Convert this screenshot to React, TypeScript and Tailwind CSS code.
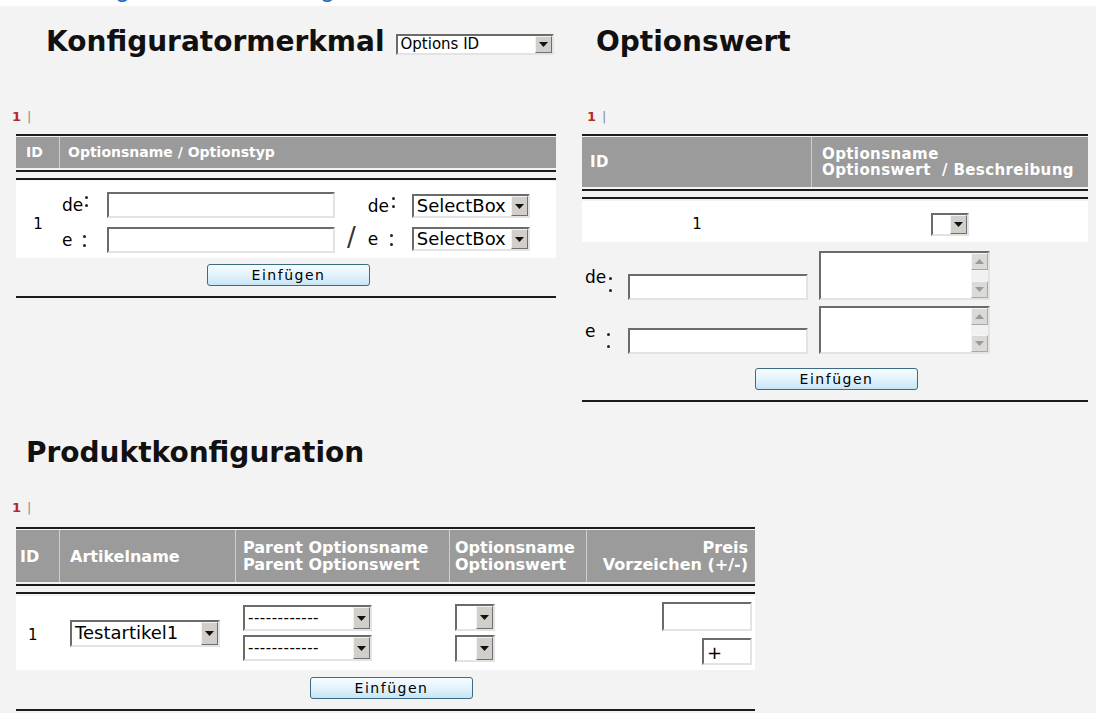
import React from 'react';

const sunken = 'border-2 border-t-[#6b6b6b] border-l-[#6b6b6b] border-b-[#e3e3e3] border-r-[#e3e3e3]';

function DownArrow({ color = '#111' }: { color?: string }) {
  return (
    <svg width="9" height="5" viewBox="0 0 9 5">
      <path d="M0 0h9L4.5 5z" fill={color} />
    </svg>
  );
}

function UpArrow({ color = '#111' }: { color?: string }) {
  return (
    <svg width="9" height="5" viewBox="0 0 9 5">
      <path d="M0 5h9L4.5 0z" fill={color} />
    </svg>
  );
}

function DropBtn() {
  return (
    <div className="w-[17px] shrink-0 flex items-center justify-center bg-[#d2cfca] border border-t-[#f2f2f2] border-l-[#f2f2f2] border-b-[#6f6f6f] border-r-[#6f6f6f]">
      <DownArrow />
    </div>
  );
}

function Select({ cls, text = '', textCls = 'text-[18px]' }: { cls: string; text?: string; textCls?: string }) {
  return (
    <div className={`flex bg-white ${sunken} ${cls}`}>
      <div className={`flex-1 flex items-center pl-[3px] overflow-hidden whitespace-nowrap leading-none ${textCls}`}>{text}</div>
      <DropBtn />
    </div>
  );
}

function Input({ cls, text = '' }: { cls: string; text?: string }) {
  return (
    <div className={`bg-white flex items-end pl-[3px] pb-[1px] text-[18px] leading-none ${sunken} ${cls}`}>{text}</div>
  );
}

function TextArea({ cls }: { cls: string }) {
  return (
    <div className={`flex bg-white ${sunken} ${cls}`}>
      <div className="flex-1" />
      <div className="w-[17px] flex flex-col justify-between bg-[#f1f1f1]">
        <div className="h-[17px] flex items-center justify-center bg-[#dcdad6] border border-t-[#f5f5f5] border-l-[#f5f5f5] border-b-[#a8a8a8] border-r-[#a8a8a8]">
          <UpArrow color="#9a9a9a" />
        </div>
        <div className="h-[17px] flex items-center justify-center bg-[#dcdad6] border border-t-[#f5f5f5] border-l-[#f5f5f5] border-b-[#a8a8a8] border-r-[#a8a8a8]">
          <DownArrow color="#9a9a9a" />
        </div>
      </div>
    </div>
  );
}

function Btn({ cls = '' }: { cls?: string }) {
  return (
    <div className={`w-[163px] h-[22px] rounded-[3px] border border-[#3d6a84] bg-linear-to-b from-[#f6fcff] via-[#e3f3fc] to-[#c6e5f5] flex items-center justify-center text-[14px] tracking-[1.5px] text-black ${cls}`}>
      Einfügen
    </div>
  );
}

function Pager({ cls = '' }: { cls?: string }) {
  return (
    <div className={`text-[13px] leading-[14px] ${cls}`}>
      <span className="font-bold text-[#b02a2f]">1</span>
      <span className="text-[#8a8a8a] ml-[6px]">|</span>
    </div>
  );
}

function Line({ cls = '' }: { cls?: string }) {
  return <div className={`h-[2px] bg-[#1c1c1c] ${cls}`} />;
}

function Heading({ children }: { children: React.ReactNode }) {
  return <h1 className="text-[28px] font-bold leading-[34px] text-[#111]">{children}</h1>;
}

// small colon made of two dots, used by the stacked labels
function Dots({ cls = '' }: { cls?: string }) {
  return (
    <span className={`flex flex-col ${cls}`}>
      <span className="w-[3px] h-[3px] rounded-full bg-[#222]" />
      <span className="w-[3px] h-[3px] rounded-full bg-[#222]" />
    </span>
  );
}

export default function App() {
  return (
    <div className="w-[1096px] h-[713px] overflow-hidden bg-[#f3f3f3] font-['DejaVu_Sans',sans-serif] text-black">
      {/* cut-off page title */}
      <div className="h-[6px] overflow-hidden bg-white">
        <div className="-mt-[19px] flex text-[18px] font-bold leading-[20px] text-[#2e6fc0] font-['Open_Sans',sans-serif] whitespace-nowrap">
          <span className="ml-[70px]">Konfiguration</span>
          <span className="ml-[34px]">Verwaltung</span>
        </div>
      </div>

      <div className="flex pl-[16px]">
        {/* Konfiguratormerkmal */}
        <div className="w-[540px]">
          <div className="flex items-center pt-[19px] pl-[30px]">
            <Heading>Konfiguratormerkmal</Heading>
            <Select cls="w-[158px] h-[21px] ml-[11px] mt-[5px]" text="Options ID" textCls="text-[15px]" />
          </div>
          <Pager cls="mt-[51px] -ml-[4px]" />
          <Line cls="mt-[10px]" />
          <div className="mt-[1px] h-[31px] bg-[#9b9b9b] flex text-white font-bold text-[14px]">
            <div className="w-[44px] border-r border-[#cfcfcf] flex items-center pl-[10px]">ID</div>
            <div className="flex items-center pl-[8px]">Optionsname / Optionstyp</div>
          </div>
          <Line cls="mt-[2px]" />
          <Line cls="mt-[6px]" />
          <div className="mt-[1px] h-[77px] bg-white flex">
            <div className="w-[44px] flex items-center justify-center pt-[10px] text-[15px]">1</div>
            <div className="flex flex-col pt-[11px] gap-[9px]">
              <div className="flex items-center h-[26px]">
                <div className="w-[47px] pl-[2px] text-[17px] leading-[20px] flex">
                  <span>de</span>
                  <Dots cls="gap-[5px] ml-[2px] mt-[1px]" />
                </div>
                <Input cls="w-[228px] h-[26px]" />
              </div>
              <div className="flex items-center h-[26px]">
                <div className="w-[47px] pl-[2px] text-[17px] leading-[20px] flex">
                  <span>e</span>
                  <Dots cls="gap-[6px] ml-[11px] mt-[5px]" />
                </div>
                <Input cls="w-[228px] h-[26px]" />
              </div>
            </div>
            <div className="ml-[12px] mt-[43px] text-[26px] leading-[26px] text-[#333]">/</div>
            <div className="flex flex-col pt-[13px] gap-[9px] ml-[12px]">
              <div className="flex items-center h-[24px]">
                <div className="w-[44px] text-[17px] leading-[20px] flex">
                  <span>de</span>
                  <Dots cls="gap-[5px] ml-[3px] mt-[1px]" />
                </div>
                <Select cls="w-[118px] h-[24px]" text="SelectBox" />
              </div>
              <div className="flex items-center h-[24px]">
                <div className="w-[44px] text-[17px] leading-[20px] flex">
                  <span>e</span>
                  <Dots cls="gap-[6px] ml-[12px] mt-[5px]" />
                </div>
                <Select cls="w-[118px] h-[24px]" text="SelectBox" />
              </div>
            </div>
          </div>
          <Btn cls="mt-[6px] ml-[191px]" />
          <Line cls="mt-[10px]" />
        </div>

        {/* Optionswert */}
        <div className="w-[506px] ml-[26px]">
          <div className="flex items-center pt-[19px] pl-[14px]">
            <Heading>Optionswert</Heading>
          </div>
          <Pager cls="mt-[51px] pl-[5px]" />
          <Line cls="mt-[10px]" />
          <div className="mt-[1px] h-[50px] bg-[#9b9b9b] flex text-white font-bold text-[15px] tracking-[0.4px]">
            <div className="w-[230px] border-r border-[#cfcfcf] flex items-center pl-[8px]">ID</div>
            <div className="flex flex-col justify-center pl-[10px] leading-[16px] whitespace-pre">
              <div>Optionsname</div>
              <div>Optionswert  / Beschreibung</div>
            </div>
          </div>
          <Line cls="mt-[2px]" />
          <Line cls="mt-[6px]" />
          <div className="mt-[2px] h-[41px] bg-white flex items-center">
            <div className="w-[230px] flex justify-center pt-[6px] text-[15px]">1</div>
            <div className="flex-1 flex justify-center pt-[6px]">
              <Select cls="w-[38px] h-[23px]" />
            </div>
          </div>
          <div className="mt-[9px] flex flex-col gap-[6px]">
            <div className="flex items-end">
              <div className="w-[46px] pl-[3px] flex items-start text-[17px] leading-[20px] pb-[8px]">
                <span>de</span>
                <Dots cls="gap-[9px] ml-[3px] mt-[10px]" />
              </div>
              <Input cls="w-[180px] h-[26px]" />
              <TextArea cls="w-[171px] h-[49px] ml-[11px]" />
            </div>
            <div className="flex items-end">
              <div className="w-[46px] pl-[3px] flex items-start text-[17px] leading-[20px] pb-[6px]">
                <span>e</span>
                <Dots cls="gap-[9px] ml-[12px] mt-[12px]" />
              </div>
              <Input cls="w-[180px] h-[26px]" />
              <TextArea cls="w-[171px] h-[48px] ml-[11px]" />
            </div>
          </div>
          <Btn cls="mt-[14px] ml-[173px]" />
          <Line cls="mt-[10px]" />
        </div>
      </div>

      {/* Produktkonfiguration */}
      <div className="pl-[16px] w-[755px]">
        <div className="mt-[34px] pl-[10px]">
          <Heading>Produktkonfiguration</Heading>
        </div>
        <Pager cls="mt-[31px] -ml-[4px]" />
        <Line cls="mt-[12px]" />
        <div className="mt-[1px] h-[52px] bg-[#9b9b9b] flex text-white font-bold text-[16px] leading-[17px] whitespace-nowrap">
          <div className="w-[44px] border-r border-[#cfcfcf] flex items-center pl-[4px]">ID</div>
          <div className="w-[176px] border-r border-[#cfcfcf] flex items-center pl-[10px]">Artikelname</div>
          <div className="w-[214px] border-r border-[#cfcfcf] flex flex-col justify-center pl-[7px]">
            <div>Parent Optionsname</div>
            <div>Parent Optionswert</div>
          </div>
          <div className="w-[137px] border-r border-[#cfcfcf] flex flex-col justify-center pl-[5px]">
            <div>Optionsname</div>
            <div>Optionswert</div>
          </div>
          <div className="flex-1 flex flex-col justify-center items-end pr-[7px]">
            <div>Preis</div>
            <div>Vorzeichen (+/-)</div>
          </div>
        </div>
        <Line cls="mt-[2px]" />
        <Line cls="mt-[6px]" />
        <div className="mt-[2px] h-[74px] bg-white flex items-center">
          <div className="w-[44px] pl-[12px] pt-[4px] text-[15px]">1</div>
          <div className="w-[176px] pl-[10px]">
            <Select cls="w-[150px] h-[27px]" text="Testartikel1" />
          </div>
          <div className="w-[214px] pl-[7px] flex flex-col gap-[4px]">
            <Select cls="w-[129px] h-[26px]" text="------------" textCls="text-[15px] tracking-[0.5px]" />
            <Select cls="w-[129px] h-[26px]" text="------------" textCls="text-[15px] tracking-[0.5px]" />
          </div>
          <div className="w-[137px] pl-[5px] flex flex-col gap-[4px]">
            <Select cls="w-[40px] h-[27px]" />
            <Select cls="w-[40px] h-[27px]" />
          </div>
          <div className="flex-1 flex flex-col items-end pr-[3px] gap-[7px]">
            <Input cls="w-[90px] h-[29px]" />
            <Input cls="w-[50px] h-[27px]" text="+" />
          </div>
        </div>
        <Btn cls="mt-[7px] ml-[294px]" />
        <Line cls="mt-[10px]" />
      </div>
    </div>
  );
}
